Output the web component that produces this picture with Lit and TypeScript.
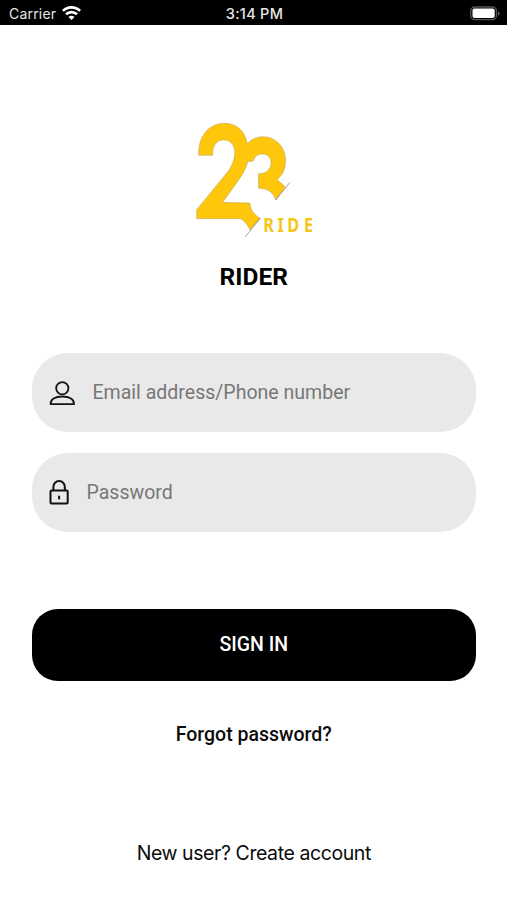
import { LitElement, html, css } from "lit";
import { customElement, property } from "lit/decorators.js";

@customElement("status-bar")
class StatusBar extends LitElement {
  static styles = css`
    :host {
      display: grid;
      grid-template-columns: 1fr auto 1fr;
      align-items: center;
      box-sizing: border-box;
      height: 25px;
      padding: 2px 7px 0 9px;
      background: #000;
      color: #e6e6e6;
      font: 400 14px/20px Inter, sans-serif;
    }
    .carrier { display: flex; align-items: center; gap: 6px; letter-spacing: 0.2px; }
    .time { font-weight: 500; font-size: 14.5px; letter-spacing: 0.3px; }
    .battery { justify-self: end; }
    svg { display: block; }
  `;
  render() {
    return html`
      <div class="carrier">
        <span>Carrier</span>
        <svg width="19" height="15" viewBox="0 0 19 15" fill="none" stroke="#fff" stroke-width="2.7">
          <path d="M.9 4.9A12.2 12.2 0 0 1 18.1 4.9" />
          <path d="M4 8.3A7.8 7.8 0 0 1 15 8.3" />
          <path d="M6.5 10.9Q9.5 8.7 12.5 10.9L9.5 14Z" fill="#fff" stroke="none" />
        </svg>
      </div>
      <span class="time">3:14 PM</span>
      <svg class="battery" width="30" height="15" viewBox="0 0 30 15">
        <rect x=".7" y="1" width="25.8" height="12.6" rx="4" fill="#000" stroke="#555" stroke-width="1.3" />
        <rect x="2.5" y="2.6" width="22.2" height="9.4" rx="2" fill="#fff" />
        <path d="M28 5.2Q31.4 7.5 28 9.8Z" fill="#666" />
      </svg>
    `;
  }
}

@customElement("ride-logo")
class RideLogo extends LitElement {
  static styles = css`
    :host { display: block; width: 150px; height: 140px; margin-left: 2.5px; }
    svg { display: block; }
    .word { font: 700 56px "Noto Sans", sans-serif; fill: #f5c518; }
  `;
  render() {
    return html`
      <svg width="150" height="140" viewBox="0 0 450 420">
        <g fill="#fec70b" stroke="#b3a36c" stroke-width="1.5" stroke-linejoin="round">
          <path
            d="M56 136C54 81 84 40 135 40C170 40 195 63 202 101C215 87 231 80 249 80C289 80 317 113 317 151C317 177 307 197 291 209C299 215 306 220 316 231L287 270C282 249 263 235 236 235L235 191C258 192 273 178 273 159C273 142 261 132 247 132C233 132 222 142 220 153L203 155C197 184 179 205 164 227L128 277L210 279C211 300 222 315 241 324L210 360C203 344 193 332 181 326L50 326L50 299L142 187C154 171 164 150 164 128C164 105 152 90 131 90C108 90 97 109 98 136Z"
          />
        </g>
        <path d="M330 217L287 270M241 324L195 381" fill="none" stroke="#77756f" stroke-width="2" />
        <text class="word" transform="translate(0 366) scale(.87 1)" x="287 336 370 428">RIDE</text>
      </svg>
    `;
  }
}

@customElement("text-field")
class TextField extends LitElement {
  @property() icon = "user";
  @property() placeholder = "";
  static styles = css`
    :host {
      display: flex;
      align-items: center;
      box-sizing: border-box;
      height: 79px;
      padding-left: 17px;
      border-radius: 36px;
      background: #e9e9e9;
      font-family: Roboto, sans-serif;
    }
    svg { display: block; flex: none; }
    input {
      flex: 1;
      min-width: 0;
      margin: 1px 24px 0 17px;
      padding: 0;
      border: 0;
      outline: 0;
      background: none;
      font: 400 19.55px/28px Roboto, sans-serif;
      color: #222;
    }
    input::placeholder { color: #777; opacity: 1; }
  `;
  render() {
    const glyph =
      this.icon === "user"
        ? html`<svg width="27" height="28" viewBox="0 0 27 28" fill="none" stroke="#151515" stroke-width="1.8">
            <circle cx="13.3" cy="9.2" r="6.1" />
            <path d="M1.6 25.1C1.3 20.1 6 17.5 13.3 17.5S25.3 20.1 25 25.1Z" stroke-linejoin="round" />
          </svg>`
        : html`<svg width="21" height="28" viewBox="0 0 21 28" fill="none" stroke="#111" stroke-width="2">
            <rect x="1.5" y="12.4" width="17.2" height="13" rx="1" />
            <path d="M4.4 12.4V8.7A5.7 5.7 0 0 1 15.8 8.7V12.4" />
            <path d="M10.1 17.7V21.4" />
          </svg>`;
    return html`${glyph}<input placeholder=${this.placeholder} />`;
  }
}

@customElement("app-root")
class AppRoot extends LitElement {
  static styles = css`
    :host {
      display: flex;
      flex-direction: column;
      height: 900px;
      background: #fff;
      color: #0b0b0b;
      font-family: Roboto, sans-serif;
    }
    main {
      display: flex;
      flex-direction: column;
      align-items: center;
      padding: 85px 31px 0 31.5px;
    }
    h1 { margin: 11px 0 0; font-size: 24.5px; line-height: 32px; font-weight: 700; color: #000; }
    form { display: flex; flex-direction: column; gap: 20.5px; align-self: stretch; margin-top: 60.3px; }
    button {
      height: 71.5px;
      margin-top: 56.8px;
      padding: 0;
      border: 0;
      border-radius: 26px;
      background: #000;
      color: #fff;
      font: 500 19.5px Roboto, sans-serif;
    }
    .forgot { margin-top: 40px; font-size: 19.5px; line-height: 28px; font-weight: 500; }
    .create { margin-top: 90px; font: 400 19.5px/28px Inter, sans-serif; letter-spacing: -0.42px; }
  `;
  render() {
    return html`
      <status-bar></status-bar>
      <main>
        <ride-logo></ride-logo>
        <h1>RIDER</h1>
        <form>
          <text-field icon="user" placeholder="Email address/Phone number"></text-field>
          <text-field icon="lock" placeholder="Password"></text-field>
          <button type="button">SIGN IN</button>
        </form>
        <div class="forgot">Forgot password?</div>
        <div class="create">New user? Create account</div>
      </main>
    `;
  }
}
